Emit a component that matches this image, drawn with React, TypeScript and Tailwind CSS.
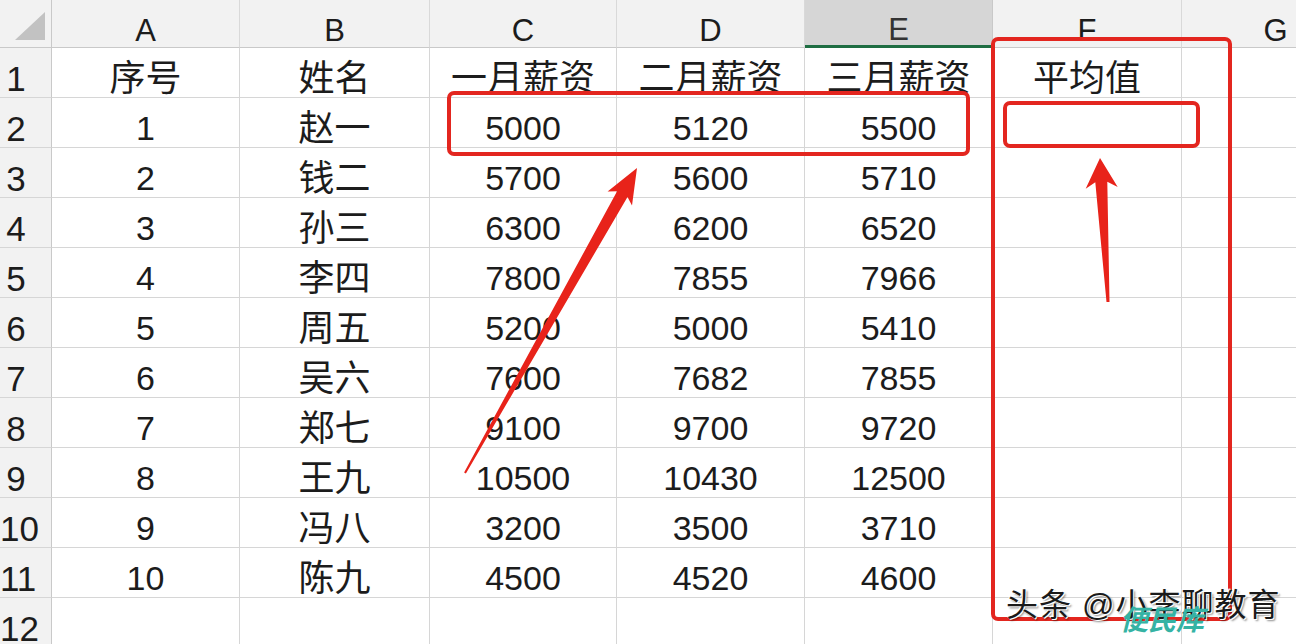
import React from 'react';

const font = "font-['Liberation_Sans','Noto_Sans_CJK_SC',sans-serif]";

const cols = ['A', 'B', 'C', 'D', 'E', 'F', 'G'];

const rows: string[][] = [
  ['序号', '姓名', '一月薪资', '二月薪资', '三月薪资', '平均值', ''],
  ['1', '赵一', '5000', '5120', '5500', '', ''],
  ['2', '钱二', '5700', '5600', '5710', '', ''],
  ['3', '孙三', '6300', '6200', '6520', '', ''],
  ['4', '李四', '7800', '7855', '7966', '', ''],
  ['5', '周五', '5200', '5000', '5410', '', ''],
  ['6', '吴六', '7600', '7682', '7855', '', ''],
  ['7', '郑七', '9100', '9700', '9720', '', ''],
  ['8', '王九', '10500', '10430', '12500', '', ''],
  ['9', '冯八', '3200', '3500', '3710', '', ''],
  ['10', '陈九', '4500', '4520', '4600', '', ''],
  ['', '', '', '', '', '', ''],
];

// red marks drawn over the sheet
function Annotations() {
  return (
    <svg className="absolute left-0 top-0 pointer-events-none" width="1296" height="644" viewBox="0 0 1296 644">
      <rect x="449" y="93" width="519" height="61" rx="5" fill="none" stroke="#e3261f" strokeWidth="4" />
      <rect x="1005" y="103" width="193" height="43" rx="5" fill="none" stroke="#e3261f" strokeWidth="4" />
      <rect x="993" y="39" width="237" height="580" rx="5" fill="none" stroke="#e3261f" strokeWidth="4" />
      <polygon
        fill="#e8231a"
        points="464.1,472.5 617.1,191.2 607.6,191.6 637,168 632,205.4 627.5,197 465.9,473.5"
      />
      <polygon
        fill="#e8231a"
        points="1106.5,302.1 1095.3,182.3 1085.7,188.8 1100,158 1117.7,187 1107.3,181.7 1109.5,301.9"
      />
    </svg>
  );
}

export default function App() {
  return (
    <div className={`relative w-[1296px] h-[644px] overflow-hidden bg-white text-[#1c1c1c] ${font}`}>
      <div className="grid grid-cols-[52px_188px_190px_187px_188px_188px_189px_188px] grid-rows-[48px_repeat(12,50px)] w-max">
        {/* corner */}
        <div className="relative bg-[#f2f2f2] border-r border-b border-[#c9c9c9]">
          <svg className="absolute left-0 top-0" width="52" height="48">
            <polygon points="15,40 45,40 45,12" fill="#c2c2c2" />
          </svg>
        </div>
        {cols.map(c => (
          <div
            key={c}
            className={
              c === 'E'
                ? 'flex items-end justify-center bg-[#d6d6d6] border-r border-[#c9c9c9] border-b-[3px] border-b-[#1f6e43] text-[31px] leading-none pb-0 text-[#333]'
                : 'flex items-end justify-center bg-[#f2f2f2] border-r border-[#d9d9d9] border-b border-b-[#c9c9c9] text-[31px] leading-none pb-[1px]'
            }
          >
            {c}
          </div>
        ))}

        {rows.map((r, i) => (
          <React.Fragment key={i}>
            <div className="flex items-end bg-[#f2f2f2] border-r border-r-[#c9c9c9] border-b border-b-[#d6d6d6] text-[35px] leading-none pb-[1px]">
              <div className="w-[32px] text-center">{i + 1}</div>
            </div>
            {r.map((v, j) => (
              <div
                key={j}
                className={
                  /^\d*$/.test(v)
                    ? 'flex items-end justify-center border-r border-b border-[#d6d6d6] text-[34px] leading-none pb-[2px] whitespace-nowrap'
                    : 'flex items-end justify-center border-r border-b border-[#d6d6d6] text-[36px] leading-none pb-0 whitespace-nowrap'
                }
              >
                {v}
              </div>
            ))}
          </React.Fragment>
        ))}
      </div>

      <Annotations />

      {/* watermark */}
      <div className="absolute left-[1006px] top-[589px] text-[32px] leading-none tracking-[1px] text-[#1a1a1a] whitespace-nowrap [text-shadow:1px_1px_0_#fff,-1px_-1px_0_#fff,2px_2px_2px_rgba(0,0,0,0.45)]">
        头条 @小李聊教育
      </div>
      <div className="absolute left-[1120px] top-[607px] text-[28px] leading-none font-bold italic text-[#35b3a4] whitespace-nowrap">
        便民库
      </div>
    </div>
  );
}
